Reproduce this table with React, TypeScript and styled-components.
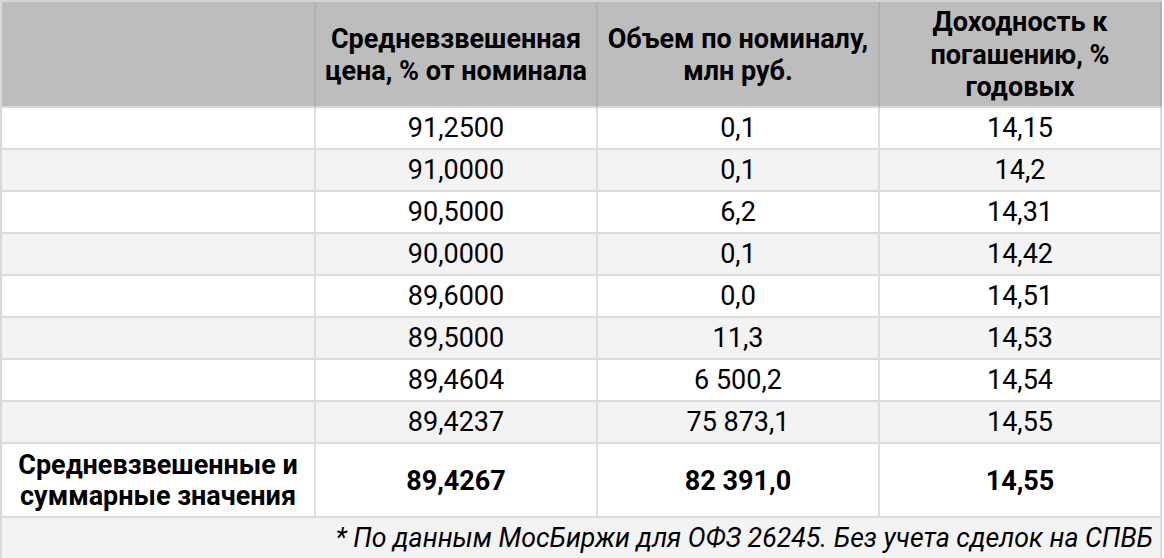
import React from "react";
import styled, { createGlobalStyle } from "styled-components";

const Global = createGlobalStyle`
  html, body { margin: 0; padding: 0; background: #ffffff; }
  body { font-family: Roboto, "Liberation Sans", Arial, sans-serif; color: #000; }
`;

const Table = styled.div`
  display: grid;
  grid-template-columns: 314px 282px 282px 282px;
  width: 1162px;
  box-sizing: border-box;
  border-top: 2px solid #d4d4d4;
  border-left: 2px solid #d9d9d9;
  font-family: Roboto, "Liberation Sans", Arial, sans-serif;
`;

const HeadCell = styled.div`
  box-sizing: border-box;
  height: 106px;
  background: #bdbdbd;
  border-right: 2px solid #b0b0b0;
  border-bottom: 2px solid #d9d9d9;
  display: flex;
  align-items: center;
  justify-content: center;
  text-align: center;
  font-weight: 700;
  font-size: 27px;
  line-height: 32.5px;
  padding: 2px 4px 0;
`;

const Cell = styled.div<{ $alt?: boolean; $bold?: boolean; $tall?: boolean }>`
  box-sizing: border-box;
  height: ${(p) => (p.$tall ? "74px" : "42px")};
  background: ${(p) => (p.$alt ? "#f3f3f3" : "#ffffff")};
  border-right: 2px solid #dcdcdc;
  border-bottom: 2px solid #dcdcdc;
  display: flex;
  align-items: center;
  justify-content: center;
  text-align: center;
  font-size: 27px;
  line-height: 31px;
  font-weight: ${(p) => (p.$bold ? 700 : 400)};
  white-space: nowrap;
  padding-top: ${(p) => (p.$tall ? "2px" : "0")};
`;

const Note = styled.div`
  grid-column: 1 / span 4;
  box-sizing: border-box;
  height: 42px;
  background: #f3f3f3;
  border-right: 2px solid #dcdcdc;
  border-bottom: 2px solid #dcdcdc;
  display: flex;
  align-items: center;
  justify-content: flex-end;
  padding-right: 7px;
  font-size: 26.7px;
  font-style: italic;
  white-space: nowrap;
`;

const rows: [string, string, string][] = [
  ["91,2500", "0,1", "14,15"],
  ["91,0000", "0,1", "14,2"],
  ["90,5000", "6,2", "14,31"],
  ["90,0000", "0,1", "14,42"],
  ["89,6000", "0,0", "14,51"],
  ["89,5000", "11,3", "14,53"],
  ["89,4604", "6 500,2", "14,54"],
  ["89,4237", "75 873,1", "14,55"],
];

export default function App() {
  return (
    <>
      <Global />
      <Table>
        <HeadCell />
        <HeadCell>
          Средневзвешенная
          <br />
          цена, % от номинала
        </HeadCell>
        <HeadCell>
          Объем по номиналу,
          <br />
          млн руб.
        </HeadCell>
        <HeadCell>
          Доходность к
          <br />
          погашению, %
          <br />
          годовых
        </HeadCell>
        {rows.map((r, i) => (
          <React.Fragment key={i}>
            <Cell $alt={i % 2 === 1} />
            <Cell $alt={i % 2 === 1}>{r[0]}</Cell>
            <Cell $alt={i % 2 === 1}>{r[1]}</Cell>
            <Cell $alt={i % 2 === 1}>{r[2]}</Cell>
          </React.Fragment>
        ))}
        <Cell $tall $bold>
          Средневзвешенные и
          <br />
          суммарные значения
        </Cell>
        <Cell $tall $bold>89,4267</Cell>
        <Cell $tall $bold>82 391,0</Cell>
        <Cell $tall $bold>14,55</Cell>
        <Note>* По данным МосБиржи для ОФЗ 26245. Без учета сделок на СПВБ</Note>
      </Table>
    </>
  );
}
